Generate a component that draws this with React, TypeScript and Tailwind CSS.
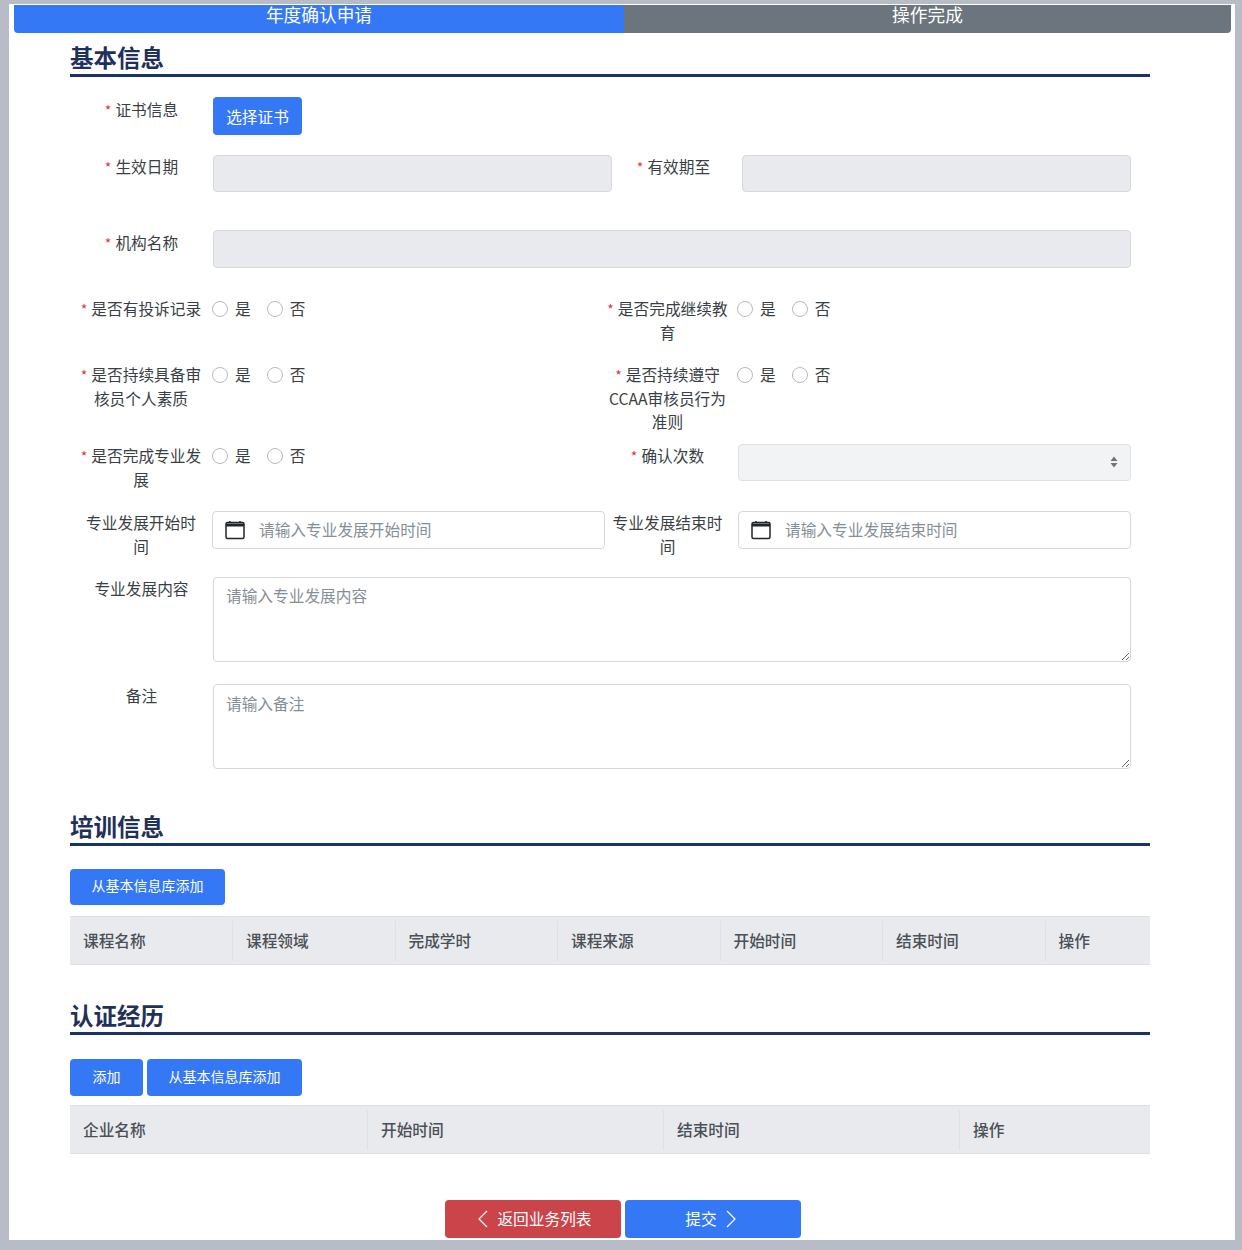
import React from 'react';

const Label = ({ text, required, wide }: { text: string; required?: boolean; wide?: boolean }) => (
  <label className={`block text-center text-[15.7px] leading-[23.5px] text-[#3a3f45] ${wide ? 'pr-[8px]' : 'px-[9px]'}`}>
    {required && <span className="mr-[4px] text-[14px] leading-none text-[#dc3545]">*</span>}
    {text}
  </label>
);

const Radios = ({ shift }: { shift?: boolean }) => (
  <div className={`flex h-[24px] items-center text-[15.7px] text-[#3a3f45] ${shift ? '-ml-[1px]' : ''}`}>
    <input type="radio" name="a" className="h-[16px] w-[16px] appearance-none rounded-full border border-[#b5bac0] bg-white" />
    <span className="ml-[7px] mr-[16px]">是</span>
    <input type="radio" name="a" className="h-[16px] w-[16px] appearance-none rounded-full border border-[#b5bac0] bg-white" />
    <span className="ml-[7px]">否</span>
  </div>
);

const CalendarIcon = () => (
  <svg width="20" height="20" viewBox="0 0 20 20" fill="none" className="shrink-0">
    <rect x="1" y="2.5" width="18" height="16" rx="1.5" stroke="#212529" strokeWidth="1.5" />
    <path d="M1 5h18" stroke="#212529" strokeWidth="3" />
    <path d="M5 1v2M15 1v2" stroke="#212529" strokeWidth="1.5" />
  </svg>
);

const DateInput = ({ placeholder }: { placeholder: string }) => (
  <div className="flex h-[38px] items-center gap-[14px] rounded-[4px] border border-[#d5d8dc] bg-white pl-[12px]">
    <CalendarIcon />
    <input
      placeholder={placeholder}
      className="w-full bg-transparent pb-[1px] text-[15.7px] outline-none placeholder:text-[#868e96]"
    />
  </div>
);

const SectionTitle = ({ children }: { children: React.ReactNode }) => (
  <h2 className="border-b-[3px] border-[#1b3468] pb-[2px] text-[23.5px] font-bold leading-[30px] text-[#1f3159]">{children}</h2>
);

const HeadCell = ({ children }: { children: React.ReactNode }) => (
  <div className="my-[4px] border-r border-[#dee0e3] px-[13px] text-[15.7px] font-medium leading-[40px] text-[#495057] last:border-r-0">
    {children}
  </div>
);

const Chevron = ({ right }: { right?: boolean }) => (
  <svg width="10" height="18" viewBox="0 0 10 18" fill="none" stroke="currentColor" strokeWidth="1.2">
    <path d={right ? 'M1 1l8 8-8 8' : 'M9 1L1 9l8 8'} />
  </svg>
);

const courseCols = ['课程名称', '课程领域', '完成学时', '课程来源', '开始时间', '结束时间', '操作'];
const expCols = ['企业名称', '开始时间', '结束时间', '操作'];

export default function App() {
  return (
    <div
      className="h-[1250px] overflow-hidden bg-[#b8bcc6] pl-[9px] pt-[4px]"
      style={{ fontFamily: '"Noto Sans CJK SC", "Liberation Sans", sans-serif' }}
    >
      <div className="h-[1236px] w-[1226px] bg-white pt-[1px]">
        {/* steps */}
        <div className="mx-[5px] flex h-[28px] w-[1217px] text-center text-[17.7px] leading-[18px] text-white">
          <div className="w-[610px] rounded-bl-[4px] bg-[#3478f6]">年度确认申请</div>
          <div className="w-[607px] rounded-br-[4px] bg-[#6c757d]">操作完成</div>
        </div>

        <div className="ml-[61px] w-[1080px] pt-[9px]">
          <SectionTitle>基本信息</SectionTitle>

          <div className="mt-[20px]">
            <div className="grid h-[58px] grid-cols-[143px_1fr]">
              <div className="pt-[1px]"><Label text="证书信息" required /></div>
              <div>
                <button className="h-[38px] w-[89px] rounded-[4px] bg-[#3478f6] pt-[2px] text-[15.7px] text-white">选择证书</button>
              </div>
            </div>

            <div className="grid h-[75px] grid-cols-[143px_399px_130px_389px]">
              <Label text="生效日期" required />
              <input disabled className="h-[37px] rounded-[4px] border border-[#d5d8dc] bg-[#e9eaed]" />
              <div className="pr-[7px]"><Label text="有效期至" required /></div>
              <input disabled className="h-[37px] rounded-[4px] border border-[#d5d8dc] bg-[#e9eaed]" />
            </div>

            <div className="grid h-[67px] grid-cols-[143px_918px]">
              <div className="pt-[1px]"><Label text="机构名称" required /></div>
              <input disabled className="h-[38px] rounded-[4px] border border-[#d5d8dc] bg-[#e9eaed]" />
            </div>

            <div className="grid h-[66px] grid-cols-[142px_393px_133px_393px]">
              <Label text="是否有投诉记录" required />
              <Radios />
              <Label text="是否完成继续教育" required wide />
              <Radios shift />
            </div>

            <div className="grid h-[81px] grid-cols-[142px_393px_133px_393px]">
              <Label text="是否持续具备审核员个人素质" required />
              <Radios />
              <Label text="是否持续遵守CCAA审核员行为准则" required wide />
              <Radios shift />
            </div>

            <div className="grid h-[67px] grid-cols-[142px_393px_133px_393px]">
              <Label text="是否完成专业发展" required />
              <Radios />
              <Label text="确认次数" required wide />
              <div className="relative h-[37px]">
                <select disabled className="h-full w-full appearance-none rounded-[4px] border border-[#dee2e6] bg-[#f1f3f5]" />
                <svg width="8" height="12" viewBox="0 0 8 12" className="absolute right-[13px] top-[12px]" fill="#6c757d">
                  <path d="M4 0.5 7.5 5h-7zM4 11.5.5 7h7z" />
                </svg>
              </div>
            </div>

            <div className="grid h-[66px] grid-cols-[142px_393px_133px_393px]">
              <Label text="专业发展开始时间" />
              <DateInput placeholder="请输入专业发展开始时间" />
              <Label text="专业发展结束时间" wide />
              <DateInput placeholder="请输入专业发展结束时间" />
            </div>

            <div className="grid h-[107px] grid-cols-[143px_918px]">
              <Label text="专业发展内容" />
              <textarea
                placeholder="请输入专业发展内容"
                className="h-[85px] rounded-[4px] border border-[#d5d8dc] px-[12px] py-[6px] text-[15.7px] leading-[23px] outline-none placeholder:text-[#868e96]"
              />
            </div>

            <div className="grid h-[85px] grid-cols-[143px_918px]">
              <Label text="备注" />
              <textarea
                placeholder="请输入备注"
                className="h-[85px] rounded-[4px] border border-[#d5d8dc] px-[12px] py-[7px] text-[15.7px] leading-[23px] outline-none placeholder:text-[#868e96]"
              />
            </div>
          </div>

          <div className="mt-[42px]">
            <SectionTitle>培训信息</SectionTitle>
          </div>
          <button className="mt-[23px] block h-[36px] w-[155px] rounded-[4px] bg-[#3478f6] pb-[4px] text-[14px] text-white">从基本信息库添加</button>
          <div className="mt-[11px] grid h-[49px] grid-cols-[163px_repeat(5,162.5px)_1fr] border-y border-[#dee0e3] bg-[#e9eaed]">
            {courseCols.map((c) => (
              <HeadCell key={c}>{c}</HeadCell>
            ))}
          </div>

          <div className="mt-[35px]">
            <SectionTitle>认证经历</SectionTitle>
          </div>
          <div className="mt-[24px] flex gap-[4px]">
            <button className="h-[37px] w-[73px] rounded-[4px] bg-[#3478f6] pb-[3px] text-[14px] text-white">添加</button>
            <button className="h-[37px] w-[155px] rounded-[4px] bg-[#3478f6] pb-[3px] text-[14px] text-white">从基本信息库添加</button>
          </div>
          <div className="mt-[9px] grid h-[49px] grid-cols-[298px_296px_296px_1fr] border-y border-[#dee0e3] bg-[#e9eaed]">
            {expCols.map((c) => (
              <HeadCell key={c}>{c}</HeadCell>
            ))}
          </div>
        </div>

        <div className="mt-[46px] ml-[436px] flex gap-[4px] text-[15.7px] text-white">
          <button className="flex h-[38px] w-[176px] items-center justify-center gap-[9px] rounded-[4px] bg-[#cb444a] pl-[4px]">
            <Chevron />
            返回业务列表
          </button>
          <button className="flex h-[38px] w-[176px] items-center justify-center gap-[9px] rounded-[4px] bg-[#3478f6] pr-[5px]">
            提交
            <Chevron right />
          </button>
        </div>
      </div>
    </div>
  );
}
